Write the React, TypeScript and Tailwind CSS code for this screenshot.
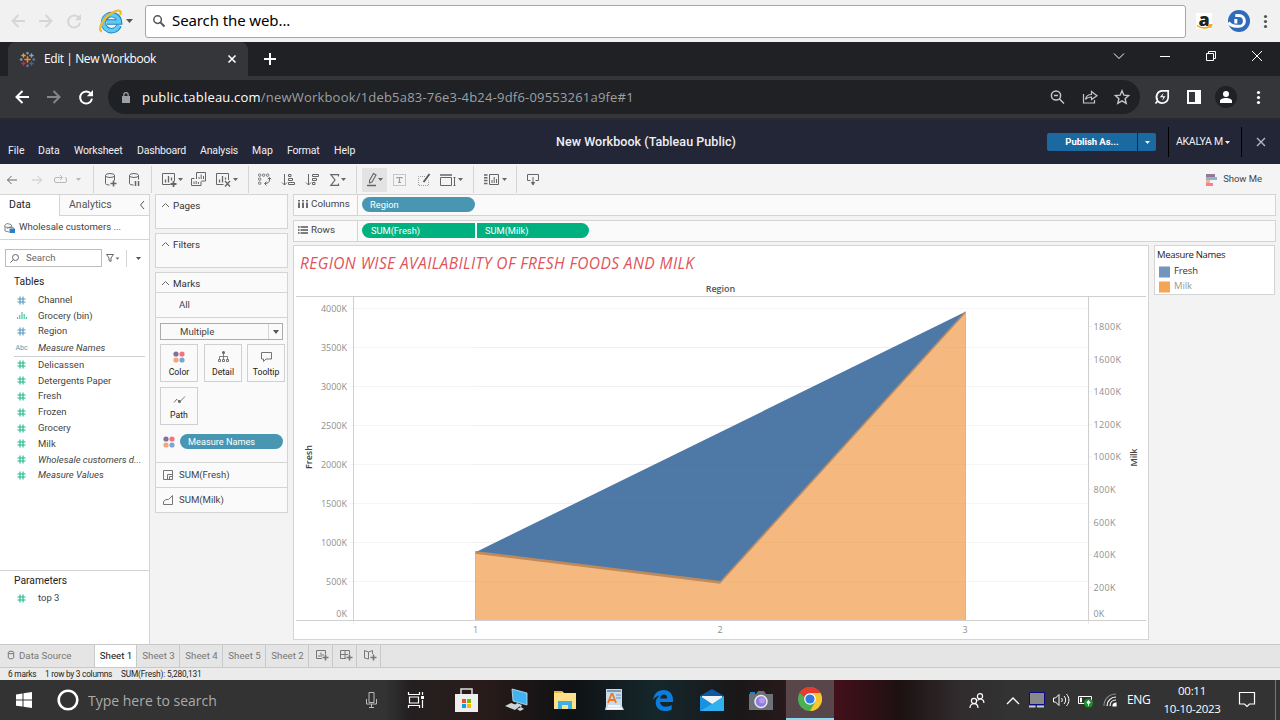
import type { ReactNode } from "react";

type IcProps = { w: number; h: number; className?: string; children: ReactNode; sw?: number };

function Ic({ w, h, className = "", children, sw = 1 }: IcProps) {
  return (
    <svg
      width={w}
      height={h}
      viewBox={`0 0 ${w} ${h}`}
      className={`shrink-0 overflow-visible ${className}`}
      fill="none"
      stroke="currentColor"
      strokeWidth={sw}
    >
      {children}
    </svg>
  );
}

function Caret({ className = "" }: { className?: string }) {
  return (
    <Ic w={5} h={3} className={className}>
      <path d="M0 0h5L2.5 3z" fill="currentColor" stroke="none" />
    </Ic>
  );
}

function LeftArrow({ className = "", sw = 2 }: { className?: string; sw?: number }) {
  return (
    <Ic w={14} h={14} className={className} sw={sw}>
      <path d="M14 7H1.5M7.5 1 1.5 7l6 6" />
    </Ic>
  );
}

function RightArrow({ className = "", sw = 2 }: { className?: string; sw?: number }) {
  return (
    <Ic w={14} h={14} className={className} sw={sw}>
      <path d="M0 7h12.5M6.5 1l6 6-6 6" />
    </Ic>
  );
}

function Reload({ className = "", sw = 2 }: { className?: string; sw?: number }) {
  return (
    <Ic w={14} h={14} className={className} sw={sw}>
      <path d="M12 4A6 6 0 1 0 13 8.6" />
      <path d="M14 0v6.2H7.8z" fill="currentColor" stroke="none" />
    </Ic>
  );
}

function TopBar() {
  return (
    <div className="flex h-[42px] items-center bg-[#f1f1f1]">
      <LeftArrow className="ml-[11px] text-[#d6d6d6]" />
      <RightArrow className="ml-[14px] text-[#d6d6d6]" />
      <Reload className="ml-[14px] text-[#d6d6d6]" />
      <Ic w={24} h={24} className="ml-[18px]">
        <path d="M20 16.500A8 8 0 1 1 20.500 13H8" stroke="#1e7fc2" strokeWidth="5.400" />
        <path d="M19.800 16.500A8 8 0 1 1 20.300 13H8" stroke="#5ccaf5" strokeWidth="3.600" />
        <path d="M3 22.500C-3 21 6 6.500 15.500 2.500c5-2 7.500-.5 5.500 3.500" stroke="#efbd23" strokeWidth="2.200" />
      </Ic>
      <Ic w={7} h={4} className="ml-[3px] text-[#555]">
        <path d="M0 0h7L3.500 4z" fill="currentColor" stroke="none" />
      </Ic>
      <div className="ml-[12px] flex h-[33px] w-[1041px] items-center rounded-[3px] border border-[#a6a6a6] bg-white">
        <Ic w={12} h={12} className="ml-[7px] text-[#555]" sw={1.5}>
          <circle cx="4.600" cy="4.600" r="3.800" />
          <path d="M7.400 7.400 11.500 11.500" strokeWidth="2" />
        </Ic>
        <span className="ml-[7px] -translate-y-px font-['Noto_Sans',sans-serif] text-[15px] leading-5 tracking-[-0.1px] text-black">Search the web...</span>
      </div>
      <div className="relative ml-[10px] flex h-4 w-4 items-center justify-center bg-white">
        <span className="-mt-[5px] font-['Open_Sans',sans-serif] text-[18px] leading-4 font-extrabold text-[#222]">a</span>
        <Ic w={15} h={4} className="absolute bottom-0 left-[1px]">
          <path d="M0 .5c4 3 9 3 13 1M11 0l3.500-.2L13.500 3" stroke="#f6a11a" strokeWidth="1.500" />
        </Ic>
      </div>
      <Ic w={22} h={22} className="ml-[16px]">
        <circle cx="11" cy="11" r="11" fill="#2f6bbd" stroke="none" />
        <path d="M7.300 5.500H11a5.400 5.400 0 0 1 0 10.800H8.500C5 16.300 2.500 15 .5 12.500" stroke="#fff" strokeWidth="3" />
        <path d="M7.800 9v4.500" stroke="#fff" strokeWidth="3" />
      </Ic>
      <Ic w={4} h={13} className="ml-[14px] text-[#555]">
        <g fill="currentColor" stroke="none">
          <circle cx="1.500" cy="1.500" r="1.600" />
          <circle cx="1.500" cy="6.500" r="1.600" />
          <circle cx="1.500" cy="11.500" r="1.600" />
        </g>
      </Ic>
    </div>
  );
}

function Cross({ x, y, r, c }: { x: number; y: number; r: number; c: string }) {
  return <path d={`M${x - r} ${y}h${r * 2}M${x} ${y - r}v${r * 2}`} stroke={c} strokeWidth={r > 2.5 ? 1.6 : 1.3} />;
}

function TabStrip() {
  return (
    <div className="flex h-[34px] items-center bg-[#202124]">
      <div className="ml-2 flex h-[34px] w-[240px] items-center rounded-t-[8px] bg-[#35363a]">
        <Ic w={15} h={15} className="ml-[12px]">
          <Cross x={7.5} y={7.5} r={3.2} c="#ff8327" />
          <Cross x={3.5} y={3.5} r={2.2} c="#f59a2c" />
          <Cross x={11.5} y={3.5} r={2.2} c="#6fb0c4" />
          <Cross x={3.5} y={11.5} r={2.2} c="#e0233c" />
          <Cross x={11.5} y={11.5} r={2.2} c="#2f68b4" />
          <Cross x={7.5} y={1.2} r={1.5} c="#6f9aa8" />
          <Cross x={7.5} y={13.8} r={1.5} c="#6070a8" />
          <Cross x={1.2} y={7.5} r={1.5} c="#6f9aa8" />
          <Cross x={13.8} y={7.5} r={1.5} c="#6070a8" />
        </Ic>
        <span className="ml-[9px] w-[175px] font-['Open_Sans',sans-serif] text-[12px] leading-4 tracking-[-0.42px] whitespace-nowrap text-white">
          Edit | New Workbook
        </span>
        <Ic w={8} h={8} className="ml-[9px] text-white" sw={1.6}>
          <path d="m.5.5 7 7m0-7-7 7" />
        </Ic>
      </div>
      <Ic w={12} h={12} className="ml-[16px] text-white" sw={2}>
        <path d="M6 0v12M0 6h12" />
      </Ic>
      <div className="ml-auto flex -translate-y-[3px] items-center text-white">
        <Ic w={10} h={6}>
          <path d="m0 .5 5 5 5-5" />
        </Ic>
        <Ic w={10} h={10} className="ml-[36px]">
          <path d="M0 5.500h10" />
        </Ic>
        <Ic w={10} h={10} className="ml-[36px]">
          <path d="M.5 2.500h7v7h-7zM2.500 2.500v-2h7v7h-2" />
        </Ic>
        <Ic w={10} h={10} className="mr-[18px] ml-[36px]">
          <path d="m0 0 10 10M10 0 0 10" />
        </Ic>
      </div>
    </div>
  );
}

function AddressBar() {
  return (
    <div className="flex h-[44px] items-center border-b-2 border-[#2a2930] bg-[#35363a]">
      <LeftArrow className="ml-[15px] text-white" />
      <RightArrow className="ml-[18px] text-[#85868a]" />
      <Reload className="ml-[18px] text-white" />
      <div className="ml-[15px] flex h-[34px] w-[1032px] items-center rounded-full bg-[#202124]">
        <Ic w={8} h={11} className="ml-[14px] text-[#9aa0a6]">
          <path d="M0 4h8v7H0z" fill="currentColor" stroke="none" />
          <path d="M1.800 4.500V2.900a2.200 2.200 0 0 1 4.400 0v1.600" strokeWidth="1.200" />
        </Ic>
        <span className="ml-[12px] w-[500px] font-['Open_Sans',sans-serif] text-[13px] leading-5 tracking-[0.2px] whitespace-nowrap text-[#9aa0a6]">
          <span className="text-white">public.tableau.com</span>/newWorkbook/1deb5a83-76e3-4b24-9df6-09553261a9fe#1
        </span>
        <div className="ml-auto flex items-center text-[#c4c7c9]">
          <Ic w={14} h={14} sw={1.5}>
            <circle cx="6" cy="5.500" r="4.600" />
            <path d="m9.500 9 4.500 4.500M4 5.500h4" />
          </Ic>
          <Ic w={15} h={14} className="ml-[18px]" sw={1.2}>
            <path d="M1.500 4v9h11v-3M3.500 9.500C4 6 6.500 4.500 9.500 4.500V1.500L15 5.800 9.500 9.500V7C7 7 5 7.500 3.500 9.500z" />
          </Ic>
          <Ic w={14} h={14} className="mr-[11px] ml-[18px]" sw={1.4}>
            <path d="m7 .8 1.900 4.400 4.700.4-3.500 3.100 1.100 4.600L7 10.900l-4.200 2.400 1.100-4.600-3.500-3.100 4.700-.4z" />
          </Ic>
        </div>
      </div>
      <Ic w={14} h={14} className="ml-[15px] text-white" sw={1.7}>
        <path d="M13.200.8v6.500a6 6 0 0 1-10.500 3.800C-.5 6 3 1 7 .9zM.5 13.500l2.500-3" />
        <path d="M8.500 3 4.800 7.300h3.500l-1 3.500L10.500 6.300H7.400z" fill="currentColor" stroke="none" />
      </Ic>
      <Ic w={14} h={14} className="ml-[18px] text-white">
        <path d="M1 1h12v12H1z" strokeWidth="2" />
        <path d="M8 1h5v12H8z" fill="currentColor" stroke="none" />
      </Ic>
      <div className="ml-[14px] flex h-[22px] w-[22px] items-center justify-center rounded-full bg-[#202124]">
        <Ic w={12} h={12} className="text-white">
          <circle cx="6" cy="3" r="3" fill="currentColor" stroke="none" />
          <path d="M0 12V10c0-2 3-3 6-3s6 1 6 3v2z" fill="currentColor" stroke="none" />
        </Ic>
      </div>
      <Ic w={3} h={13} className="ml-[20px] text-white">
        <g fill="currentColor" stroke="none">
          <circle cx="1.500" cy="1.500" r="1.600" />
          <circle cx="1.500" cy="6.500" r="1.600" />
          <circle cx="1.500" cy="11.500" r="1.600" />
        </g>
      </Ic>
    </div>
  );
}

function Header() {
  return (
    <header className="grid h-[44px] grid-cols-[556px_1fr_auto] bg-[#232637] font-['Roboto',sans-serif] text-[#f0f0f2]">
      <nav className="flex items-end pb-[5px] text-[10.5px] leading-4 whitespace-nowrap">
        <span className="ml-[8px] w-[30px]">File</span>
        <span className="w-[36px]">Data</span>
        <span className="w-[63px] tracking-[-0.15px]">Worksheet</span>
        <span className="w-[63px] tracking-[-0.2px]">Dashboard</span>
        <span className="w-[52px] tracking-[-0.15px]">Analysis</span>
        <span className="w-[35px]">Map</span>
        <span className="w-[47px] tracking-[-0.2px]">Format</span>
        <span>Help</span>
      </nav>
      <h1 className="mt-[13px] text-[12.5px] leading-[18px] font-medium tracking-[0.05px] whitespace-nowrap">New Workbook (Tableau Public)</h1>
      <div className="flex items-center text-[10.5px]">
        <button className="h-[18px] w-[90px] rounded-l-[2px] bg-[#1a6aa1] text-[9.500px] leading-[18px] font-bold tracking-[-0.05px] text-white">
          Publish As...
        </button>
        <button className="ml-px flex h-[18px] w-[18px] items-center justify-center rounded-r-[2px] bg-[#1a6aa1]">
          <Caret />
        </button>
        <div className="ml-[12px] h-[30px] w-px bg-black" />
        <span className="ml-[7px] w-[48px] tracking-[-0.3px] whitespace-nowrap">AKALYA M</span>
        <Caret className="ml-[1px]" />
        <div className="ml-[11px] h-[30px] w-px bg-black" />
        <Ic w={8} h={8} className="mr-[15px] ml-[15px] text-[#b9bac2]" sw={1.3}>
          <path d="m0 0 8 8m0-8L0 8" />
        </Ic>
      </div>
    </header>
  );
}

function Sep({ className = "" }: { className?: string }) {
  return <div className={`h-[27px] w-px shrink-0 bg-[#d4d4d4] ${className}`} />;
}

function Toolbar() {
  return (
    <div className="flex h-[30px] items-center bg-[#f4f4f4] pt-[1px] text-[#666]">
      <Ic w={10} h={8} className="ml-[7px]">
        <path d="M10 4H.5M4.500 0l-4 4 4 4" />
      </Ic>
      <Ic w={10} h={8} className="ml-[15px] text-[#c6c6c6]">
        <path d="M0 4h9.500M5.500 0l4 4-4 4" />
      </Ic>
      <Ic w={13} h={8} className="ml-[12px] text-[#b8b8b8]">
        <path d="M8 1.500H2a1.500 1.500 0 0 0-1.500 1.500v2A1.500 1.500 0 0 0 2 6.500h9A1.500 1.500 0 0 0 12.500 5V3A1.500 1.500 0 0 0 11 1.500M6-1l2.500 2.500L6 4" />
      </Ic>
      <Caret className="ml-[9px] text-[#b8b8b8]" />
      <Sep className="ml-[12px]" />
      <Ic w={11} h={13} className="ml-[11px]">
        <ellipse cx="5" cy="2.500" rx="4.500" ry="2" />
        <path d="M.5 2.500v8c0 .9 2 1.500 4 1.500M9.500 2.500v5" />
        <path d="M8.500 7.500v6M5.500 10.500h6" strokeWidth="1.600" />
      </Ic>
      <Ic w={10} h={13} className="ml-[13px]">
        <ellipse cx="5" cy="2.500" rx="4.500" ry="2" />
        <path d="M.5 2.500v8c0 .9 2 1.500 4 1.500M9.500 2.500v4" />
        <path d="M6.500 8v5M9.500 8v5" strokeWidth="1.500" />
      </Ic>
      <Sep className="ml-[12px]" />
      <Ic w={15} h={13} className="ml-[10px]">
        <path d="M8.500 11.500H.5V.5h12v7.500" />
        <path d="M3.500 9.500V6.500M6.500 9.500V3M9.500 7.500V4.500" strokeWidth="1.300" />
        <path d="M11.500 8v6M8.500 11h6" strokeWidth="1.800" />
      </Ic>
      <Caret className="ml-[1px]" />
      <Ic w={15} h={13} className="ml-[8px]">
        <path d="M5.500 6V-.5h9V8h-4M8 6V4M10.200 6V1.500M12.500 6V3M3.500 5.500h-3v7h9.500v-4M3 11V8.500M5.200 11V8M7.400 11V9" />
      </Ic>
      <Ic w={15} h={13} className="ml-[10px]">
        <path d="M7.500 11.500h-7V.5h12v6.500" />
        <path d="M3.500 9.500V6.500M6.500 9.500V3M9.500 6.500V4.500" strokeWidth="1.300" />
        <path d="m9 8 5 5.500M14 8l-5 5.500" strokeWidth="1.400" />
      </Ic>
      <Caret className="ml-[2px]" />
      <Sep className="ml-[10px]" />
      <Ic w={13} h={13} className="ml-[9px]">
        <g strokeWidth=".9">
          <rect x=".5" y="1" width="2.300" height="2.300" rx=".8" />
          <rect x="4.500" y="1" width="2.300" height="2.300" rx=".8" />
          <rect x="8.500" y="1" width="2.300" height="2.300" rx=".8" />
          <rect x=".5" y="5" width="2.300" height="2.300" rx=".8" />
          <rect x=".5" y="9" width="2.300" height="2.300" rx=".8" />
        </g>
        <path d="M11.500 5v2c0 2-1.500 3.500-4.500 3.500M9.700 6.200 11.500 4.500l1.600 1.700M8.500 8.700 6.500 10.500l2 2" />
      </Ic>
      <Ic w={13} h={12} className="ml-[11px]">
        <path d="M2.500 0v11M0 8.500 2.500 11 5 8.500M6.500.5h2.500v2H6.500zM6.500 4.500h4v2h-4zM6.500 8.500h6v2h-6z" />
      </Ic>
      <Ic w={13} h={12} className="ml-[11px]">
        <path d="M2.500 0v11M0 8.500 2.500 11 5 8.500M6.500.5h6v2h-6zM6.500 4.500h4v2h-4zM6.500 8.500h2.500v2H6.500z" />
      </Ic>
      <Ic w={9} h={12} className="ml-[11px]">
        <path d="M8.500 2.500V.7H.8L5 6 .8 11.300h7.700V9.500" strokeWidth="1.200" />
      </Ic>
      <Caret className="ml-[2px]" />
      <Sep className="ml-[10px]" />
      <div className="ml-[5px] flex h-[24px] w-[25px] shrink-0 items-center bg-[#e3e3e3]">
        <Ic w={10} h={13} className="ml-[5px]">
          <path d="M6.500.5 9 2 5 9 2.500 10 2.500 7.500z" strokeWidth="1.100" />
          <path d="M0 12.500h9" strokeWidth="1.500" />
        </Ic>
        <Caret className="ml-[1px]" />
      </div>
      <Ic w={13} h={12} className="ml-[6px] text-[#9a9a9a]">
        <path d="M.5.500h12v11H.5z" strokeDasharray="1 1" />
        <path d="M4 4.500V3.500h5v1M6.500 3.500v5M5 8.500h3" strokeWidth="1.200" />
      </Ic>
      <Ic w={12} h={12} className="ml-[12px] text-[#9a9a9a]">
        <path d="M7 2.500H.5v9h10v-5" strokeDasharray="1 1" />
        <path d="M11.500 0 7.500 5.500 5.500 8" stroke="#555" strokeWidth="1.800" />
      </Ic>
      <Ic w={16} h={12} className="ml-[10px]">
        <path d="M.5 3.500h11v8H.5z" />
        <path d="M0 1h12" strokeWidth="2" stroke="#888" />
        <path d="M14.500 3.500v8M13.500 3.500h2M13.500 11.500h2" />
      </Ic>
      <Caret className="ml-[2px]" />
      <Sep className="ml-[10px]" />
      <Ic w={15} h={11} className="ml-[10px]">
        <path d="M5.500.5h9v10h-9zM8 9V6M10.200 9V3M12.500 9V5" />
        <path d="M0 1h3.500M0 3.700h3.500M0 6.400h3.500M0 9.500h3.500" strokeWidth="1.500" />
      </Ic>
      <Caret className="ml-[3px]" />
      <Sep className="ml-[9px]" />
      <Ic w={12} h={12} className="ml-[10px]">
        <path d="M3.500 6.500h-3v-6h11v6h-3M6 3v8" />
        <path d="M3.700 8h4.600L6 11.500z" fill="currentColor" stroke="none" />
      </Ic>
      <Ic w={12} h={12} className="ml-auto">
        <g stroke="none">
          <path d="M0 0h9v3H0z" fill="#927a95" />
          <path d="M0 3h11v3H0z" fill="#8fb2d5" />
          <path d="M0 6h4v3H0z" fill="#fbb08a" />
          <path d="M0 9h7v3H0z" fill="#f6808d" />
        </g>
      </Ic>
      <span className="mr-[18px] ml-[5px] font-['Roboto',sans-serif] text-[9.500px] tracking-[-0.05px] whitespace-nowrap text-[#444]">Show Me</span>
    </div>
  );
}

function Hash({ green }: { green?: boolean }) {
  return (
    <Ic w={9} h={9} className={green ? "text-[#1db78c]" : "text-[#5199b8]"} sw={1.1}>
      <path d="M3 .5v8M6 .5v8M.5 3h8M.5 6h8" />
    </Ic>
  );
}

function Field({ icon, name, italic, h }: { icon: ReactNode; name: string; italic?: boolean; h: string }) {
  return (
    <div className={`flex items-center text-[#444] ${h}`}>
      <div className="ml-[14px] flex w-[15px] justify-center">{icon}</div>
      <span className={`ml-[9px] text-[9.500px] leading-3 whitespace-nowrap ${italic ? "italic" : ""}`}>{name}</span>
    </div>
  );
}

const measures: { name: string; italic?: boolean }[] = [
  { name: "Delicassen" },
  { name: "Detergents Paper" },
  { name: "Fresh" },
  { name: "Frozen" },
  { name: "Grocery" },
  { name: "Milk" },
  { name: "Wholesale customers d...", italic: true },
  { name: "Measure Values", italic: true },
];

function DataPane() {
  return (
    <aside className="flex w-[150px] shrink-0 flex-col border-t border-r border-[#d4d4d4] bg-white">
      <div className="flex h-[21px] text-[10.5px] leading-[20px]">
        <span className="w-[60px] border-r border-[#d4d4d4] pl-[9px] text-[#222]">Data</span>
        <div className="flex flex-1 items-center border-b border-[#d4d4d4] bg-[#fafafa] pl-[9px] text-[#555]">
          Analytics
          <Ic w={4} h={8} className="mr-[5px] ml-auto">
            <path d="M4 0 .5 4 4 8" />
          </Ic>
        </div>
      </div>
      <div className="flex h-[24px] items-center border-b border-[#d4d4d4] text-[9.600px] text-[#444]">
        <Ic w={11} h={10} className="ml-[4px] text-[#777]">
          <path d="M.5 2.500 3 .5l4 1 1 2-2 1-5-.5zM1 4v4l4 1M3 5.500l3-1.500 4 1" strokeWidth=".9" />
          <path d="M5.500 5.500h5.500v4.500H5.500z" fill="#2f7fc0" stroke="none" />
        </Ic>
        <span className="ml-[4px] whitespace-nowrap">Wholesale customers ...</span>
      </div>
      <div className="mt-[9px] flex h-[18px] items-center">
        <div className="ml-[5px] flex h-[18px] w-[97px] items-center border border-[#bcbcbc] text-[9.600px] text-[#666]">
          <Ic w={9} h={9} className="ml-[4px]">
            <circle cx="5.500" cy="3.500" r="3" />
            <path d="M3.300 5.700.3 8.700" />
          </Ic>
          <span className="ml-[7px]">Search</span>
        </div>
        <Ic w={8} h={8} className="ml-[4px] text-[#666]">
          <path d="M.5.500h7L5 4v3.500L3 6.500V4z" />
        </Ic>
        <Caret className="ml-[1px] scale-75 text-[#666]" />
        <div className="ml-[6px] h-[17px] w-px bg-[#d4d4d4]" />
        <Caret className="ml-[9px] text-[#555]" />
      </div>
      <h2 className="mt-[8px] ml-[14px] h-[17px] text-[10.300px] leading-[14px] text-[#222]">Tables</h2>
      <Field h="h-[16px]" name="Channel" icon={<Hash />} />
      <Field
        h="h-[15px]"
        name="Grocery (bin)"
        icon={
          <Ic w={10} h={7} className="text-[#4cc4a2]" sw={1.2}>
            <path d="M.6 7V5M2.800 7V3M5 7V0M7.200 7V2M9.400 7V5" />
          </Ic>
        }
      />
      <Field h="h-[16px]" name="Region" icon={<Hash />} />
      <Field h="h-[17px]" name="Measure Names" italic icon={<span className="text-[7px] leading-3 text-[#5199b8]">Abc</span>} />
      <div className="mr-[4px] ml-[14px] h-px shrink-0 bg-[#cfcfcf]" />
      {measures.map((m) => (
        <Field key={m.name} h="h-[15.790px]" name={m.name} italic={m.italic} icon={<Hash green />} />
      ))}
      <div className="mt-auto h-[74px] border-t border-[#d4d4d4]">
        <h2 className="mt-[2px] ml-[14px] h-[17px] text-[10.300px] leading-[16px] text-[#222]">Parameters</h2>
        <Field h="h-[16px]" name="top 3" icon={<Hash green />} />
      </div>
    </aside>
  );
}

function CardTitle({ children }: { children: ReactNode }) {
  return (
    <div className="flex h-[19px] items-center pt-[2px] text-[9.800px] leading-[17px] text-[#333]">
      <Ic w={7} h={4} className="mr-[4px] ml-[6px] -translate-y-px text-[#666]">
        <path d="M0 4 3.500.5 7 4" />
      </Ic>
      {children}
    </div>
  );
}

function ColorDots() {
  return (
    <Ic w={12} h={12}>
      <g stroke="none">
        <circle cx="3" cy="3" r="2.600" fill="#83709b" />
        <circle cx="9" cy="3" r="2.600" fill="#f7707f" />
        <circle cx="3" cy="9" r="2.600" fill="#f5a47c" />
        <circle cx="9" cy="9" r="2.600" fill="#7ba6d0" />
      </g>
    </Ic>
  );
}

function MarkButton({ icon, label }: { icon: ReactNode; label: string }) {
  return (
    <button className="flex h-[38px] w-[38px] flex-col items-center border border-[#d0d0d0] bg-[#fafafa] pt-[5px] text-[#666]">
      <span className="flex h-[13px] items-center">{icon}</span>
      <span className="mt-[3px] text-[8.700px] leading-3 text-[#222]">{label}</span>
    </button>
  );
}

function Cards() {
  return (
    <div className="ml-[5px] w-[133px] shrink-0">
      <section className="h-[35px] border border-[#d4d4d4] bg-[#fafafa]">
        <CardTitle>Pages</CardTitle>
      </section>
      <section className="mt-[4px] h-[35px] border border-[#d4d4d4] bg-[#fafafa]">
        <CardTitle>Filters</CardTitle>
      </section>
      <section className="mt-[4px] h-[241px] border border-[#d4d4d4] bg-[#fafafa] text-[9.600px] text-[#444]">
        <CardTitle>Marks</CardTitle>
        <div className="h-[26px] border-t border-b border-[#d4d4d4] pl-[23px] leading-[24px]">All</div>
        <div className="mt-[5px] ml-[4px] flex h-[17px] w-[123px] items-center border border-[#acacac]">
          <span className="ml-[19px] w-[88px] pt-px leading-[16px]">Multiple</span>
          <div className="flex h-[15px] flex-1 items-center justify-center border-l border-[#d4d4d4]">
            <Ic w={6} h={4} className="text-[#555]">
              <path d="M0 0h6L3 4z" fill="currentColor" stroke="none" />
            </Ic>
          </div>
        </div>
        <div className="mt-[4px] ml-[4px] grid grid-cols-[44px_43px_38px] gap-y-[5px]">
          <MarkButton label="Color" icon={<ColorDots />} />
          <MarkButton
            label="Detail"
            icon={
              <Ic w={11} h={11}>
                <circle cx="5.500" cy="1.500" r="1.500" fill="currentColor" stroke="none" />
                <path d="M5.500 2v6M1.500 8V5.500h8V8" strokeWidth=".8" />
                <path d="M.5 8.500h2v2h-2zM4.500 8.500h2v2h-2zM8.500 8.500h2v2h-2z" strokeWidth=".9" />
              </Ic>
            }
          />
          <MarkButton
            label="Tooltip"
            icon={
              <Ic w={11} h={10}>
                <path d="M.5.500h10v6.500H5L2.500 9.500V7h-2z" strokeWidth=".9" />
              </Ic>
            }
          />
          <MarkButton
            label="Path"
            icon={
              <Ic w={11} h={8}>
                <path d="M0 6.500 3 3M3.500 4 6 5.500 11 .5" strokeWidth=".9" />
                <circle cx="5.500" cy="5.500" r="1.500" fill="currentColor" stroke="none" />
              </Ic>
            }
          />
        </div>
        <div className="mt-[9px] ml-[7px] flex h-[15px] items-center">
          <ColorDots />
          <div className="ml-[5px] h-[15px] w-[103px] rounded-full bg-[#4996b2] pl-[8px] text-[9.200px] leading-[15px] text-white">Measure Names</div>
        </div>
        <div className="mt-[13px] flex h-[25px] items-center border-t border-[#d4d4d4] leading-[24px]">
          <Ic w={10} h={10} className="mr-[6px] ml-[7px] text-[#777]">
            <path d="M.5.500h9v9h-9zM4.500 9.500v-5h5M6.500 9.500v-3h3" />
          </Ic>
          SUM(Fresh)
        </div>
        <div className="flex h-[25px] items-center border-t border-[#d4d4d4] leading-[24px]">
          <Ic w={10} h={10} className="mr-[6px] ml-[7px] text-[#777]">
            <path d="M.5 9.500V6.500L3 4.500h2.500L9.500.5v9z" />
          </Ic>
          SUM(Milk)
        </div>
      </section>
    </div>
  );
}

function Shelf({ label, icon, children }: { label: string; icon: ReactNode; children: ReactNode }) {
  return (
    <div className="flex h-[22px] w-[983px] items-center border border-[#d4d4d4] bg-[#fafafa] text-[9.800px] text-[#444]">
      <div className="flex h-full w-[64px] items-center gap-[3px] border-r border-[#d4d4d4] pb-[2px] pl-[4px]">
        {icon}
        {label}
      </div>
      <div className="mb-px ml-[4px] flex h-[15px] gap-[2px] text-[9.300px] leading-[15px] text-white">{children}</div>
    </div>
  );
}

const leftTicks = ["4000K", "3500K", "3000K", "2500K", "2000K", "1500K", "1000K", "500K"];
const rightTicks = ["1800K", "1600K", "1400K", "1200K", "1000K", "800K", "600K", "400K", "200K"];

function Chart() {
  return (
    <svg width="853" height="358" viewBox="294 281 853 358" className="block font-['Open_Sans',sans-serif]" fontSize="9" fill="#8f8f8f">
      <text x="720.500" y="292" textAnchor="middle" fontWeight="600" fill="#555" textLength="29.500">
        Region
      </text>
      {leftTicks.map((t, i) => (
        <g key={t}>
          <path d={`M349 ${308.5 + i * 39}H1088`} stroke="#f4f4f4" />
          <text x="347" y={312 + i * 39} textAnchor="end">
            {t}
          </text>
        </g>
      ))}
      <text x="347" y="617" textAnchor="end">
        0K
      </text>
      {rightTicks.map((t, i) => (
        <g key={t}>
          <path d={`M1089 ${326.5 + i * 32.6}h3`} stroke="#f0f0f0" />
          <text x="1093.500" y={330 + i * 32.62} textLength={t.length === 5 ? 27.5 : 22}>
            {t}
          </text>
        </g>
      ))}
      <text x="1093.500" y="617">
        0K
      </text>
      <path d="M477 551.500 966 311.500V620H475z" fill="#4e79a7" />
      <path d="M475 552 720.500 582.500 966 312V620H475z" fill="#f5b87e" />
      {[347.5, 386.5, 425.5, 464.5, 503.5, 542.5, 581.5].map((y) => (
        <path key={y} d={`M475 ${y}H966`} stroke="#000" strokeOpacity=".015" />
      ))}
      <path d="m475 552.300 245.500 30" stroke="#bf8a5b" strokeWidth="2.800" />
      <path d="M720 582.500 965.500 312" stroke="#b58c69" strokeWidth="1.600" fill="none" />
      <path d="M475.500 552v68M965.500 312v308" stroke="#f1a964" strokeOpacity=".7" />
      <path d="M296 296.500h850M296 620.500h850M353.500 297v323M1088.500 297v323" stroke="#cfcfcf" fill="none" />
      <path d="M353.500 621v3M1088.500 621v3" stroke="#ebebeb" />
      <text x="475.500" y="633" textAnchor="middle">1</text>
      <text x="720" y="633" textAnchor="middle">2</text>
      <text x="965" y="633" textAnchor="middle">3</text>
      <text transform="translate(312 457) rotate(-90)" textAnchor="middle" fontWeight="600" fill="#444" textLength="24">
        Fresh
      </text>
      <text transform="translate(1137 457.500) rotate(-90)" textAnchor="middle" fontWeight="600" fill="#444" textLength="18">
        Milk
      </text>
    </svg>
  );
}

function Sheet() {
  return (
    <div className="ml-[5px] flex flex-1 flex-col">
      <Shelf
        label="Columns"
        icon={
          <Ic w={10} h={8} sw={1.7} className="text-[#555]">
            <path d="M1 0v1.600M1 2.500V8M5 0v1.600M5 2.500V8M9 0v1.600M9 2.500V8" />
          </Ic>
        }
      >
        <div className="w-[113px] rounded-full bg-[#4996b2] pl-[8px]">Region</div>
      </Shelf>
      <div className="h-[4px]" />
      <Shelf
        label="Rows"
        icon={
          <Ic w={10} h={8} sw={1.4} className="text-[#555]">
            <path d="M0 1h1.600M2.500 1H10M0 4h1.600M2.500 4H10M0 7h1.600M2.500 7H10" />
          </Ic>
        }
      >
        <div className="w-[113px] rounded-l-full bg-[#00b180] pl-[9px]">SUM(Fresh)</div>
        <div className="w-[112px] rounded-r-full bg-[#00b180] pl-[8px]">SUM(Milk)</div>
      </Shelf>
      <div className="mt-[3px] flex items-start">
        <section className="h-[395px] w-[856px] border border-[#d4d4d4] bg-white">
          <h2 className="h-[35px] pl-[6px] font-['Open_Sans',sans-serif] text-[16px] leading-[35px] tracking-[0.42px] whitespace-nowrap text-[#e0535a] italic">
            <span className="inline-block origin-left scale-x-[0.970]">REGION WISE AVAILABILITY OF FRESH FOODS AND MILK</span>
          </h2>
          <Chart />
        </section>
        <section className="ml-[5px] h-[50px] w-[121px] border border-[#d4d4d4] bg-white pl-[2px] font-['Open_Sans',sans-serif] text-[9.500px] tracking-[-0.1px] text-[#333]">
          <h3 className="h-[18px] leading-[18px] tracking-[-0.32px] text-[#222]">Measure Names</h3>
          <div className="flex h-[15px] items-center">
            <span className="mr-[4px] ml-[2px] h-[11px] w-[11px] translate-y-[0.500px] bg-[#7195bd]" />
            <span className="-translate-y-px leading-[12px]">Fresh</span>
          </div>
          <div className="flex h-[15px] items-center">
            <span className="mr-[4px] ml-[2px] h-[11px] w-[11px] translate-y-[0.500px] bg-[#f6a557]" />
            <span className="-translate-y-px leading-[12px] text-[#999]">Milk</span>
          </div>
        </section>
      </div>
    </div>
  );
}

function SheetTabs() {
  return (
    <div className="flex h-[24px] border-t border-b border-[#c9c9c9] bg-[#e5e5e5] text-[9.700px] leading-[21px] whitespace-nowrap text-[#777]">
      <div className="flex w-[95px] items-center border-r border-[#c9c9c9] pb-[2px] pl-[8px]">
        <Ic w={6} h={8} className="mr-[5px]">
          <ellipse cx="3" cy="1.500" rx="2.700" ry="1.300" />
          <path d="M.3 1.500v5c0 .8 1 1.300 2.700 1.300s2.700-.5 2.700-1.300v-5" />
        </Ic>
        Data Source
      </div>
      <div className="w-[42px] border-r border-[#c9c9c9] bg-white pl-px text-center text-[#111]">Sheet 1</div>
      {["Sheet 3", "Sheet 4", "Sheet 5", "Sheet 2"].map((s) => (
        <div key={s} className="w-[43px] border-r border-[#c9c9c9] pl-px text-center">
          {s}
        </div>
      ))}
      {["M.5.500h9v8h-9zM3 7V5M5 7V2.500M7 6V4", "M.5.500h9v8h-9zM5 .5v8M.5 4.500h9", "M.5.500 4.500 2v7L.5 8zM4.500 2l4-1.500v5"].map((d) => (
        <div key={d} className="flex w-[24px] items-center border-r border-[#c9c9c9] pb-[2px] pl-[7px]">
          <Ic w={12} h={10}>
            <path d={d} />
            <path d="M6 7.500h7M9.500 4v7" stroke="#e5e5e5" strokeWidth="3" />
            <path d="M6.500 7.500h6M9.500 4.500v6" strokeWidth="1.600" />
          </Ic>
        </div>
      ))}
    </div>
  );
}

function StatusBar() {
  return (
    <div className="flex h-[12px] bg-[#ebebeb] text-[8.300px] leading-[13px] tracking-[-0.1px] whitespace-nowrap text-[#222]">
      <span className="ml-[8px] w-[37px] tracking-[-0.2px]">6 marks</span>
      <span className="w-[76px] tracking-[-0.25px]">1 row by 3 columns</span>
      <span className="tracking-[-0.15px]">SUM(Fresh): 5,280,131</span>
    </div>
  );
}

function Taskbar() {
  return (
    <footer className="flex h-[40px] items-center bg-[linear-gradient(90deg,#333_0,#333_385px,#241f20_410px,#2a1b1b_480px,#0f1113_570px,#15272c_655px,#1a1718_740px,#2a1a1c_790px,#43101a_836px,#1d1112_900px,#302c2d_960px,#333_1010px,#333_100%)] font-['Open_Sans',sans-serif] text-white">
      <Ic w={16} h={16} className="ml-[16px]">
        <path d="M0 2.500 6.500 1.500v6H0zM7.500 1.300 16 0v7.500H7.500zM0 8.500h6.500v6L0 13.700zM7.500 8.500H16V16l-8.500-1.200z" fill="#fff" stroke="none" />
      </Ic>
      <Ic w={20} h={20} className="ml-[26px]" sw={2.6}>
        <circle cx="10" cy="10" r="9.300" />
      </Ic>
      <span className="ml-[10px] w-[270px] pt-px text-[14px] leading-5 text-[#aaa]">Type here to search</span>
      <Ic w={10} h={16} className="ml-[8px] text-[#bbb]">
        <path d="M3 .5h5v10H3zM.5 7v5h10V7M5.500 12v3.500M3 15.500h5" />
      </Ic>
      <Ic w={17} h={16} className="ml-[32px]">
        <path d="M.5 0v2.500h11V0M.5 16v-2.500h11V16M1.500 5h9v6h-9zM14.500 0v3M14.500 8v8" strokeWidth="1.200" />
        <path d="M13 4h3v3h-3z" fill="#fff" stroke="none" />
      </Ic>
      <Ic w={23} h={24} className="ml-[30px]">
        <path d="M6 7V1h11v6" stroke="#ddd" strokeWidth="1.500" />
        <path d="M0 6h23v18H0z" fill="#eee" stroke="none" />
        <path d="M7 11h4v4H7z" fill="#f25022" stroke="none" />
        <path d="M12 11h4v4h-4z" fill="#7fba00" stroke="none" />
        <path d="M7 16h4v4H7z" fill="#00a4ef" stroke="none" />
        <path d="M12 16h4v4h-4z" fill="#ffb900" stroke="none" />
      </Ic>
      <Ic w={23} h={22} className="ml-[27px]">
        <path d="M7 0 22 4v12L8 12z" fill="#41b3f2" stroke="#cde4ef" strokeWidth=".8" />
        <path d="m12 14 5 2-1 2-6-2zM0 17l6-3 9 3-5 4zM12 20l4-2 3 2-4 2z" fill="#ced3d6" stroke="none" />
      </Ic>
      <Ic w={22} h={19} className="ml-[26px]">
        <path d="M0 0h8l2 2h12v16H0z" fill="#fde08a" stroke="none" />
        <path d="M0 0h8v2H0z" fill="#e8b93c" stroke="none" />
        <path d="M4 18v-8h14v8h-4v-4H8v4z" fill="#3db0e6" stroke="none" />
      </Ic>
      <Ic w={19} h={22} className="ml-[29px]">
        <path d="M1 0h16v17l2 4H0l1-4z" fill="#c9dcea" stroke="none" />
        <path d="M2 1h14v2H2z" fill="#7c99b3" stroke="none" />
        <path d="m3 14 3.500-9h1L11 14M4.500 11h5" stroke="#ef7628" strokeWidth="1.800" />
        <path d="M11 6h5M11 9h5" stroke="#6f95c8" />
        <path d="M3 17h12M2 19.500h15" stroke="#fff" strokeWidth="1.500" />
      </Ic>
      <Ic w={20} h={21} className="ml-[29px]">
        <path d="M0 10C1 3.500 5 0 10.500 0 17 0 20 5 20 9.500V12H7c.3 3 2.500 4.700 6 4.700 2 0 4-.6 5.700-1.600v4.300C17 20.500 14.500 21 12 21 6.500 21 2.700 17.500 2.700 12.500c0-3 1.700-5.500 4.300-7C3.500 5.800 1.500 7.500 0 10zM7.200 8.500h7C14.200 6 13 4.500 11 4.500S7.500 6 7.200 8.500z" fill="#0c7cdd" stroke="none" />
      </Ic>
      <Ic w={24} h={22} className="ml-[27px]">
        <path d="M0 7 12 0l12 7v8H0z" fill="#0a5aa5" stroke="none" />
        <path d="M2 7h20v9H2z" fill="#f0f2f4" stroke="none" />
        <path d="M0 7 12 15 24 7v15H0z" fill="#2fb1ef" stroke="none" />
        <path d="m12 15-12 7V7z" fill="#1b8fe0" stroke="none" />
      </Ic>
      <Ic w={24} h={19} className="ml-[25px]">
        <path d="M0 3h7l2-3h6l2 3h7v16H0z" fill="#6b7278" stroke="none" />
        <path d="M1 1h5v2H1z" fill="#1487d4" stroke="none" />
        <circle cx="12" cy="10.500" r="6" fill="#8f7cdc" stroke="#ecebf3" strokeWidth="1.500" />
        <circle cx="13" cy="9.500" r="3" fill="#b59af0" stroke="none" />
      </Ic>
      <div className="ml-[13px] flex h-[40px] w-[48px] shrink-0 items-center justify-center border-b-2 border-[#84dcee] bg-[#58464b]">
        <svg width="24" height="24" viewBox="0 0 24 24">
          <circle cx="12" cy="12" r="12" fill="#4caf50" />
          <path d="M12 12 1.600 6A12 12 0 0 1 22.400 6z" fill="#e53c30" />
          <path d="M12 6h10.400A12 12 0 0 1 12 24l5.200-9z" fill="#fbc62d" />
          <path d="M1.600 6 6.800 15 12 12V6z" fill="#4caf50" />
          <path d="M1.600 6A12 12 0 0 1 22.400 6H12a6 6 0 0 0-5.500 4z" fill="#e53c30" />
          <circle cx="12" cy="12" r="5.800" fill="#fff" />
          <circle cx="12" cy="12" r="4.600" fill="#3478e5" />
        </svg>
      </div>
      <div className="ml-auto flex items-center">
        <Ic w={14} h={15} sw={1.2}>
          <circle cx="10" cy="3.300" r="2.600" />
          <circle cx="4" cy="8" r="2.600" />
          <path d="M0 15c0-2.500 1.600-4.300 4-4.300S8 12.500 8 15M7.500 7.500c3-3 6.500-1 6.500 2.500" />
        </Ic>
        <Ic w={12} h={7} className="ml-[23px]" sw={1.3}>
          <path d="m0 7 6-6 6 6" />
        </Ic>
        <Ic w={16} h={16} className="ml-[10px]">
          <path d="M.5.500h15v12H.5z" fill="#898989" stroke="#0b0b8a" />
          <path d="M0 14.500h6.500M8 14.500h7" stroke="#ccc" strokeWidth="2" />
        </Ic>
        <Ic w={16} h={12} className="ml-[8px]">
          <path d="M.5 4h2L6 .5v11L2.500 8h-2zM8.500 4c1 1.300 1 2.700 0 4M11 2c2.200 2.600 2.200 5.400 0 8M13.500 0c3.200 4 3.200 8 0 12" />
        </Ic>
        <Ic w={15} h={12} className="ml-[9px]">
          <path d="M.5 2.500h13v7H.5z" />
          <path d="M2.500 4h1v4h-1z" fill="#fff" />
          <circle cx="10.500" cy="9" r="4.500" fill="#149627" stroke="none" />
          <path d="m10.500 6.500 1.700 2-1.700 1.700-1.700-1.700zM10.500 10v2" fill="#fff" strokeWidth=".8" />
        </Ic>
        <Ic w={12} h={12} className="ml-[11px]" sw={1.2}>
          <path d="M0 12C0 5 5 0 12 0" stroke="#888" />
          <path d="M3 12c0-5 4-9 9-9M6 12c0-3.500 2.500-6 6-6" />
          <path d="M9 12a3 3 0 0 1 3-3v3z" fill="#fff" />
        </Ic>
        <span className="ml-[11px] w-[24px] text-[12px] tracking-[-0.4px]">ENG</span>
        <div className="ml-[10px] flex w-[62px] flex-col items-center text-[11.500px] leading-[18px] tracking-[-0.3px] whitespace-nowrap">
          <span>00:11</span>
          <span>10-10-2023</span>
        </div>
        <Ic w={16} h={16} className="ml-[16px]" sw={1.2}>
          <path d="M.5.500h15v11.500H10.500L8 14.500 5.500 12h-5z" />
        </Ic>
        <div className="mr-[4px] ml-[20px] h-[40px] w-px bg-[#777]" />
      </div>
    </footer>
  );
}

export default function App() {
  return (
    <div className="flex h-[720px] w-[1280px] flex-col overflow-hidden bg-[#f3f3f3] font-['Roboto',sans-serif]">
      <TopBar />
      <TabStrip />
      <AddressBar />
      <Header />
      <Toolbar />
      <main className="flex h-[450px]">
        <DataPane />
        <Cards />
        <Sheet />
      </main>
      <SheetTabs />
      <StatusBar />
      <Taskbar />
    </div>
  );
}
